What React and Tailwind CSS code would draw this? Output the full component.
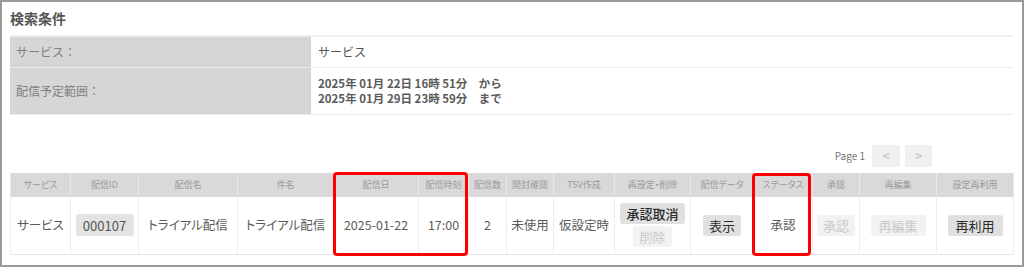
const font = "font-['Noto_Sans_CJK_JP','Noto_Sans',sans-serif]";

const cols = [60, 68, 99, 96, 85, 50, 38, 47, 61, 76, 63, 59, 47, 77, 77];
const heads = ['サービス', '配信ID', '配信名', '件名', '配信日', '配信時刻', '配信数', '開封確認', 'TSV作成', '再設定・削除', '配信データ', 'ステータス', '承認', '再編集', '設定再利用'];

function Btn({ children, off, className = '' }) {
  return (
    <span
      className={
        'inline-flex h-[21px] items-center justify-center rounded-[3px] px-[6px] text-[13px] ' +
        (off ? 'bg-[#f2f2f2] text-[#c9c9c9] ' : 'bg-[#e0e0e0] text-[#2a2a2a] ') +
        className
      }
    >
      {children}
    </span>
  );
}

export default function App() {
  return (
    <div className={`h-[267px] w-[1024px] border-2 border-[#9a9a9a] bg-white px-[8px] text-[#555] ${font}`}>
      <div className="flex h-[33px] items-center text-[14px] font-bold text-[#555]">検索条件</div>

      <table className="w-[1003px] table-fixed border-collapse border-t-2 border-[#efefef] text-[12px]">
        <colgroup>
          <col className="w-[301px]" />
          <col />
        </colgroup>
        <tbody>
          <tr className="h-[31px] border-b border-[#ececec]">
            <td className="bg-[#d6d6d6] pl-[6px] text-[#808080]">サービス：</td>
            <td className="pl-[7px] text-[#555]">サービス</td>
          </tr>
          <tr className="h-[47px] border-b border-[#ececec]">
            <td className="bg-[#d6d6d6] pl-[6px] text-[#808080]">配信予定範囲：</td>
            <td className="pl-[7px] text-[11.5px] font-semibold leading-[15px] text-[#5a5a5a]">
              <div>2025年 01月 22日 16時 51分　から</div>
              <div>2025年 01月 29日 23時 59分　まで</div>
            </td>
          </tr>
        </tbody>
      </table>

      <div className="mt-[30px] flex h-[22px] w-[1003px] items-center justify-end gap-[5px] pr-[81px]">
        <span className="mr-[2px] text-[10px] text-[#777]">Page 1</span>
        <span className="flex h-[22px] w-[28px] items-center justify-center bg-[#f0f0f0] text-[13px] text-[#bbb]">&lt;</span>
        <span className="flex h-[22px] w-[27px] items-center justify-center bg-[#f0f0f0] text-[13px] text-[#bbb]">&gt;</span>
      </div>

      <div className="relative mt-[6px] w-[1003px]">
        <table className="w-[1003px] table-fixed border-collapse text-center [font-feature-settings:'palt']">
          <colgroup>
            {cols.map((w, i) => (
              <col key={i} style={{ width: w }} />
            ))}
          </colgroup>
          <thead>
            <tr className="h-[24px] bg-[#d9d9d9]">
              {heads.map((h) => (
                <th key={h} className="border-x border-[#eaeaea] text-[9px] font-normal text-[#999]">
                  {h}
                </th>
              ))}
            </tr>
          </thead>
          <tbody>
            <tr className="h-[58px] border-b border-[#e6e6e6] text-[12.5px] text-[#5a5a5a]">
              <td className="border-x border-[#ececec]">サービス</td>
              <td className="border-x border-[#ececec]">
                <span className="inline-flex h-[22px] w-[58px] items-center justify-center rounded-[3px] bg-[#e3e3e3] text-[13px] text-[#555]">000107</span>
              </td>
              <td className="border-x border-[#ececec]">トライアル配信</td>
              <td className="border-x border-[#ececec]">トライアル配信</td>
              <td className="border-x border-[#ececec]">2025-01-22</td>
              <td className="border-x border-[#ececec]">17:00</td>
              <td className="border-x border-[#ececec]">2</td>
              <td className="border-x border-[#ececec]">未使用</td>
              <td className="border-x border-[#ececec]">仮設定時</td>
              <td className="border-x border-[#ececec]">
                <div className="flex flex-col items-center gap-[2px]">
                  <Btn className="font-medium">承認取消</Btn>
                  <Btn off>削除</Btn>
                </div>
              </td>
              <td className="border-x border-[#ececec]">
                <Btn>表示</Btn>
              </td>
              <td className="border-x border-[#ececec]">承認</td>
              <td className="border-x border-[#ececec]">
                <Btn off>承認</Btn>
              </td>
              <td className="border-x border-[#ececec]">
                <Btn off className="w-[55px]">再編集</Btn>
              </td>
              <td className="border-x border-[#ececec]">
                <Btn className="w-[55px]">再利用</Btn>
              </td>
            </tr>
          </tbody>
        </table>
        <div className="pointer-events-none absolute left-[323px] top-[-1px] h-[84px] w-[135px] rounded-[4px] border-[3px] border-[#f00]" />
        <div className="pointer-events-none absolute left-[742px] top-0 h-[83px] w-[59px] rounded-[4px] border-[3px] border-[#f00]" />
      </div>
    </div>
  );
}
